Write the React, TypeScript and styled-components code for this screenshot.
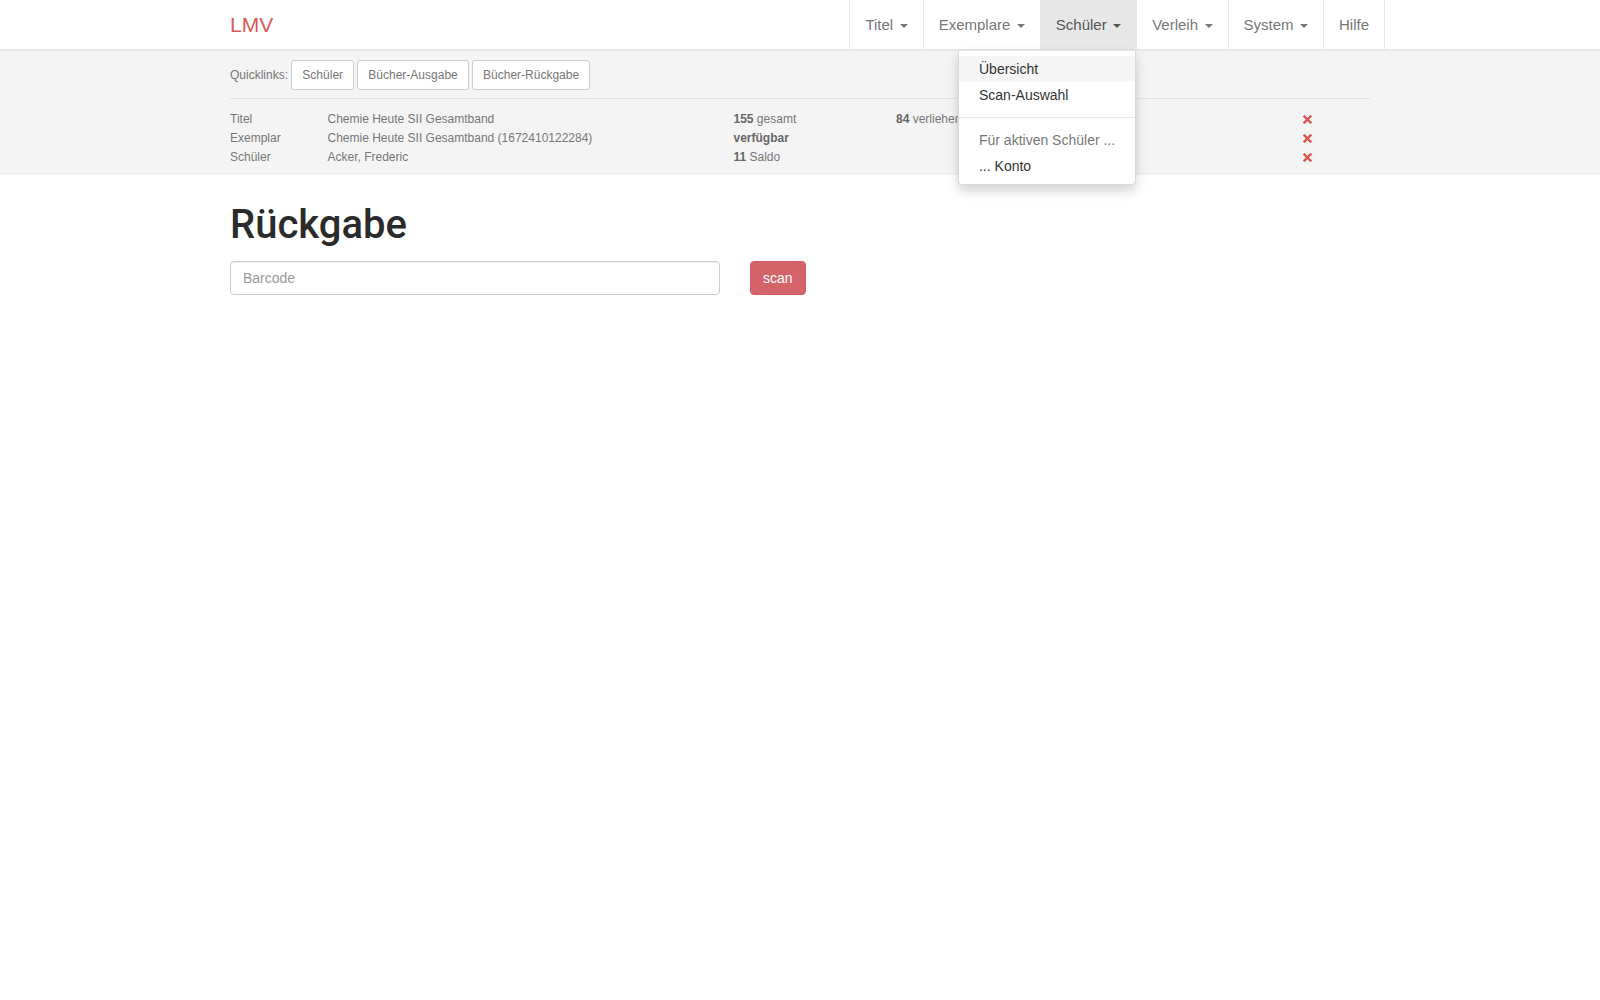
import styled, { createGlobalStyle } from "styled-components";

const GlobalStyle = createGlobalStyle`
  html, body {
    margin: 0;
    padding: 0;
    background: #fff;
    font-family: "Liberation Sans", Arial, sans-serif;
    font-size: 14px;
    line-height: 1.42857;
    color: #333;
  }
  * {
    box-sizing: border-box;
  }
`;

const Container = styled.div`
  width: 1170px;
  margin: 0 auto;
  padding: 0 15px;
`;

const Navbar = styled.nav`
  height: 50px;
  background: #fff;
  border-bottom: 1px solid #e4e4e4;
  box-shadow: 0 1px 2px rgba(0, 0, 0, 0.06);
  position: relative;
  z-index: 10;
`;

const NavInner = styled(Container)`
  display: flex;
  justify-content: space-between;
  height: 49px;
`;

const Brand = styled.a`
  font-size: 21px;
  line-height: 20px;
  padding: 15px 0;
  color: #d65a5a;
  text-decoration: none;
`;

const NavList = styled.ul`
  display: flex;
  list-style: none;
  margin: 0 -15px 0 0;
  padding: 0;
  border-right: 1px solid #e7e7e7;
`;

const NavItem = styled.li<{ $active?: boolean }>`
  position: relative;
  border-left: 1px solid #e7e7e7;
  background: ${(p) => (p.$active ? "#e7e7e7" : "transparent")};
  height: 49px;

  > a {
    display: block;
    padding: 15px 15px 14px;
    font-size: 15px;
    line-height: 20px;
    color: ${(p) => (p.$active ? "#555" : "#777")};
    text-decoration: none;
    white-space: nowrap;
  }
`;

const Caret = styled.span`
  display: inline-block;
  width: 0;
  height: 0;
  margin-left: 2.3px;
  vertical-align: middle;
  border-top: 4px solid;
  border-right: 4px solid transparent;
  border-left: 4px solid transparent;
`;

const DropdownMenu = styled.ul`
  position: absolute;
  top: 50px;
  right: 0;
  margin: 0;
  padding: 5px 0;
  list-style: none;
  background: #fff;
  border: 1px solid rgba(0, 0, 0, 0.15);
  border-top: 1px solid #e2e2e2;
  border-radius: 0 0 4px 4px;
  box-shadow: 0 6px 12px rgba(0, 0, 0, 0.175);
  white-space: nowrap;
  min-width: 178px;
  z-index: 20;
`;

const DropdownItem = styled.li<{ $hover?: boolean; $header?: boolean }>`
  padding: 3px 20px;
  font-size: 14px;
  line-height: 20px;
  color: ${(p) => (p.$header ? "#777" : "#333")};
  background: ${(p) => (p.$hover ? "#f5f5f5" : "transparent")};
`;

const DropdownDivider = styled.li`
  height: 1px;
  margin: 9px 0;
  background: #e5e5e5;
`;

const SubHeader = styled.div`
  background: #f4f4f4;
  padding: 10px 0 6px;
  border-bottom: 1px solid #ebebeb;
  box-shadow: 0 1px 2px rgba(0, 0, 0, 0.04);
`;

const QuickLinks = styled.div`
  font-size: 12px;
  color: #777;
  padding-bottom: 8px;
  border-bottom: 1px solid #e3e3e3;
  margin-bottom: 11px;
`;

const QuickButton = styled.a`
  display: inline-block;
  margin-right: 3.3px;
  padding: 6px 10px 5px;
  font-size: 12px;
  line-height: 17px;
  color: #777;
  background: #fff;
  border: 1px solid #ccc;
  border-radius: 3px;
  text-decoration: none;
`;

const InfoGrid = styled.div`
  display: grid;
  grid-template-columns: 97.5px 406px 162.5px 406px 20px;
  font-size: 12px;
  line-height: 19px;
  color: #777;

  b {
    color: #666;
  }
`;

const RemoveIcon = styled.span`
  display: flex;
  align-items: center;
  height: 19px;
  padding-left: 1px;
`;

const Main = styled(Container)`
  padding-top: 29px;
`;

const Title = styled.h1`
  font-family: Roboto, "Liberation Sans", sans-serif;
  font-weight: 500;
  font-size: 40px;
  line-height: 44px;
  color: #2b2b2b;
  margin: 0 0 14px;
`;

const ScanForm = styled.form`
  display: flex;
  gap: 30px;
`;

const BarcodeInput = styled.input`
  width: 490px;
  height: 34px;
  padding: 6px 12px;
  font-family: "Liberation Sans", Arial, sans-serif;
  font-size: 14px;
  color: #555;
  border: 1px solid #ccc;
  border-radius: 4px;
  box-shadow: inset 0 1px 1px rgba(0, 0, 0, 0.075);

  &::placeholder {
    color: #999;
  }
`;

const ScanButton = styled.button`
  height: 34px;
  padding: 6px 12px;
  font-family: "Liberation Sans", Arial, sans-serif;
  font-size: 14px;
  color: #fff;
  background: #d5646a;
  border: 1px solid #cf5c62;
  border-radius: 4px;
`;

function Remove() {
  return (
    <RemoveIcon>
      <svg width="9" height="9" viewBox="0 0 9 9">
        <path
          d="M1.5 1.5 L7.5 7.5 M7.5 1.5 L1.5 7.5"
          stroke="#d9534f"
          strokeWidth="2.3"
          strokeLinecap="square"
        />
      </svg>
    </RemoveIcon>
  );
}

function App() {
  const navItems = ["Titel", "Exemplare", "Schüler", "Verleih", "System"];

  return (
    <>
      <GlobalStyle />
      <Navbar>
        <NavInner>
          <Brand href="#">LMV</Brand>
          <NavList>
            {navItems.map((item) => (
              <NavItem key={item} $active={item === "Schüler"}>
                <a href="#">
                  {item} <Caret />
                </a>
                {item === "Schüler" && (
                  <DropdownMenu>
                    <DropdownItem $hover>Übersicht</DropdownItem>
                    <DropdownItem>Scan-Auswahl</DropdownItem>
                    <DropdownDivider />
                    <DropdownItem $header>Für aktiven Schüler ...</DropdownItem>
                    <DropdownItem>... Konto</DropdownItem>
                  </DropdownMenu>
                )}
              </NavItem>
            ))}
            <NavItem>
              <a href="#">Hilfe</a>
            </NavItem>
          </NavList>
        </NavInner>
      </Navbar>
      <SubHeader>
        <Container>
          <QuickLinks>
            Quicklinks: <QuickButton>Schüler</QuickButton>
            <QuickButton>Bücher-Ausgabe</QuickButton>
            <QuickButton>Bücher-Rückgabe</QuickButton>
          </QuickLinks>
          <InfoGrid>
            <span>Titel</span>
            <span>Chemie Heute SII Gesamtband</span>
            <span>
              <b>155</b> gesamt
            </span>
            <span>
              <b>84</b> verliehen
            </span>
            <Remove />
            <span>Exemplar</span>
            <span>Chemie Heute SII Gesamtband (1672410122284)</span>
            <span>
              <b>verfügbar</b>
            </span>
            <span />
            <Remove />
            <span>Schüler</span>
            <span>Acker, Frederic</span>
            <span>
              <b>11</b> Saldo
            </span>
            <span />
            <Remove />
          </InfoGrid>
        </Container>
      </SubHeader>
      <Main>
        <Title>Rückgabe</Title>
        <ScanForm onSubmit={(e) => e.preventDefault()}>
          <BarcodeInput placeholder="Barcode" />
          <ScanButton type="submit">scan</ScanButton>
        </ScanForm>
      </Main>
    </>
  );
}

export default App;
